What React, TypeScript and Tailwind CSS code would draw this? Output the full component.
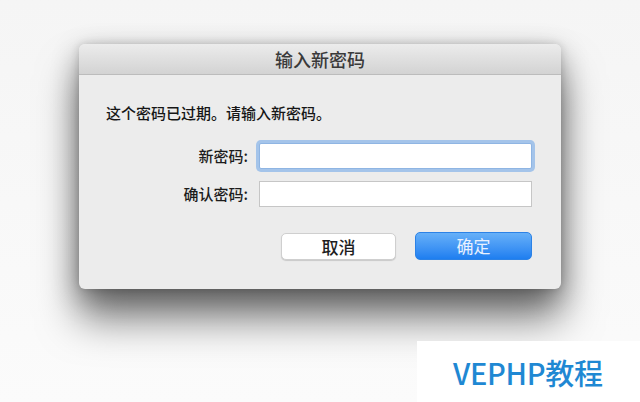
import React from "react";

const font = { fontFamily: '"Noto Sans CJK SC", "Noto Sans", sans-serif' };

function Field({ label, focused }: { label: string; focused?: boolean }) {
  return (
    <div className="flex items-center h-[26px]">
      <label className="w-[170px] text-right pr-[1px] text-[15px] leading-[20px] font-medium text-[#1c1c1c]">{label}</label>
      <div className="ml-[10px] w-[273px] h-[26px]">
        <input
          type="text"
          className={
            focused
              ? "w-full h-full bg-white border border-[#8fb5e3] outline-none shadow-[0_0_0_3px_#a4c4ea] rounded-[2px]"
              : "w-full h-full bg-white border border-[#c6c6c6] outline-none"
          }
        />
      </div>
    </div>
  );
}

export default function App() {
  return (
    <div
      style={font}
      className="relative w-[640px] h-[402px] overflow-hidden bg-gradient-to-b from-[#f5f5f5] to-[#fbfbfb]"
    >
      <div className="pt-[44px] pl-[79px]">
        <div className="w-[482px] h-[245px] rounded-[6px] bg-[#ececec] flex flex-col shadow-[0_30px_40px_rgba(0,0,0,0.5),0_8px_28px_rgba(0,0,0,0.3),0_0_8px_rgba(0,0,0,0.15)]">
          <div className="h-[31px] shrink-0 rounded-t-[6px] bg-gradient-to-b from-[#ececec] to-[#d3d3d3] border-b border-[#bcbcbc] flex items-center justify-center">
            <span className="text-[18px] leading-[22px] font-medium text-[#3a3a3a]">输入新密码</span>
          </div>
          <div className="flex flex-col">
            <p className="mt-[28px] ml-[27px] text-[15px] leading-[20px] font-medium text-[#161616]">
              这个密码已过期。请输入新密码。
            </p>
            <div className="mt-[20px] flex flex-col gap-[12px]">
              <Field label="新密码:" focused />
              <Field label="确认密码:" />
            </div>
            <div className="mt-[26px] flex justify-end gap-[19px] pr-[29px]">
              <button className="w-[115px] h-[27px] rounded-[5px] bg-white border border-[#cfcfcf] shadow-[0_1px_1px_rgba(0,0,0,0.15)] text-[17px] leading-[20px] font-medium text-[#1e1e1e]">
                取消
              </button>
              <button className="w-[117px] h-[28px] -mt-[1px] rounded-[5px] bg-gradient-to-b from-[#66b0f8] to-[#1d7ef0] border border-[#2c82e6] text-[17px] leading-[20px] text-[#e8f1ff]">
                确定
              </button>
            </div>
          </div>
        </div>
      </div>
      <div className="absolute left-[417px] top-[341px] w-[223px] h-[61px] bg-white flex items-center pl-[36px]">
        <span className="text-[29px] leading-[34px] font-medium text-[#1f88d3] tracking-[-0.3px]">VEPHP教程</span>
      </div>
    </div>
  );
}
